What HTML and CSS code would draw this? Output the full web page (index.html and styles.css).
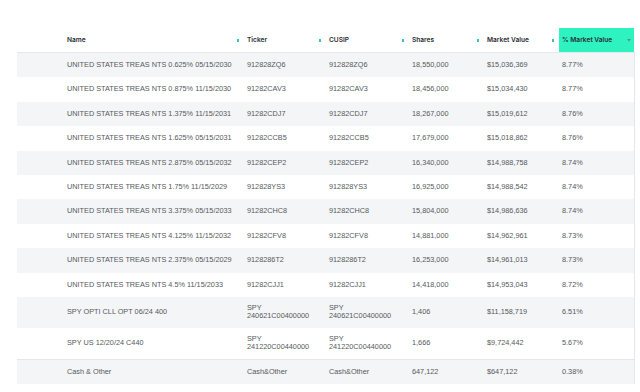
FILE: index.html
```html
<!DOCTYPE html>
<html lang="en">
<head>
    <meta charset="UTF-8">
    <meta name="viewport" content="width=device-width, initial-scale=1.0">
    <title>Holdings</title>
    <link rel="stylesheet" href="styles.css">
</head>
<body>

<div class="holdings">
  <table class="holdings-table">
    <colgroup>
      <col class="col-name">
      <col class="col-ticker">
      <col class="col-cusip">
      <col class="col-shares">
      <col class="col-mv">
      <col class="col-pct">
    </colgroup>
    <thead>
      <tr>
        <th class="first"><div class="th-in">Name <span class="sort-dot"></span></div></th>
        <th><div class="th-in">Ticker <span class="sort-dot"></span></div></th>
        <th><div class="th-in">CUSIP <span class="sort-dot"></span></div></th>
        <th><div class="th-in">Shares <span class="sort-dot"></span></div></th>
        <th><div class="th-in">Market Value <span class="sort-dot"></span></div></th>
        <th class="active"><div class="th-in">% Market Value <svg class="caret" width="4" height="3" viewBox="0 0 4 3"><path d="M0 0 L4 0 L2 2.5 Z" fill="#5f8f80"/></svg></div></th>
      </tr>
    </thead>
    <tbody>
      <tr><td class="first">UNITED STATES TREAS NTS 0.625% 05/15/2030</td><td>912828ZQ6</td><td>912828ZQ6</td><td>18,550,000</td><td>$15,036,369</td><td class="last">8.77%</td></tr>
      <tr><td class="first">UNITED STATES TREAS NTS 0.875% 11/15/2030</td><td>91282CAV3</td><td>91282CAV3</td><td>18,456,000</td><td>$15,034,430</td><td class="last">8.77%</td></tr>
      <tr><td class="first">UNITED STATES TREAS NTS 1.375% 11/15/2031</td><td>91282CDJ7</td><td>91282CDJ7</td><td>18,267,000</td><td>$15,019,612</td><td class="last">8.76%</td></tr>
      <tr><td class="first">UNITED STATES TREAS NTS 1.625% 05/15/2031</td><td>91282CCB5</td><td>91282CCB5</td><td>17,679,000</td><td>$15,018,862</td><td class="last">8.76%</td></tr>
      <tr><td class="first">UNITED STATES TREAS NTS 2.875% 05/15/2032</td><td>91282CEP2</td><td>91282CEP2</td><td>16,340,000</td><td>$14,988,758</td><td class="last">8.74%</td></tr>
      <tr><td class="first">UNITED STATES TREAS NTS 1.75% 11/15/2029</td><td>912828YS3</td><td>912828YS3</td><td>16,925,000</td><td>$14,988,542</td><td class="last">8.74%</td></tr>
      <tr><td class="first">UNITED STATES TREAS NTS 3.375% 05/15/2033</td><td>91282CHC8</td><td>91282CHC8</td><td>15,804,000</td><td>$14,986,636</td><td class="last">8.74%</td></tr>
      <tr><td class="first">UNITED STATES TREAS NTS 4.125% 11/15/2032</td><td>91282CFV8</td><td>91282CFV8</td><td>14,881,000</td><td>$14,962,961</td><td class="last">8.73%</td></tr>
      <tr><td class="first">UNITED STATES TREAS NTS 2.375% 05/15/2029</td><td>9128286T2</td><td>9128286T2</td><td>16,253,000</td><td>$14,961,013</td><td class="last">8.73%</td></tr>
      <tr><td class="first">UNITED STATES TREAS NTS 4.5% 11/15/2033</td><td>91282CJJ1</td><td>91282CJJ1</td><td>14,418,000</td><td>$14,953,043</td><td class="last">8.72%</td></tr>
      <tr class="two-line"><td class="first">SPY OPTI CLL OPT 06/24 400</td><td>SPY<br>240621C00400000</td><td>SPY<br>240621C00400000</td><td>1,406</td><td>$11,158,719</td><td class="last">6.51%</td></tr>
      <tr class="two-line"><td class="first">SPY US 12/20/24 C440</td><td>SPY<br>241220C00440000</td><td>SPY<br>241220C00440000</td><td>1,666</td><td>$9,724,442</td><td class="last">5.67%</td></tr>
      <tr class="cash"><td class="first">Cash &amp; Other</td><td>Cash&amp;Other</td><td>Cash&amp;Other</td><td>647,122</td><td>$647,122</td><td class="last">0.38%</td></tr>
    </tbody>
  </table>
</div>

</body>
</html>
```

FILE: styles.css
```css
/*RESETS*/

body {
    margin: 0;
    background: #fff;
}

/*HOLDINGS TABLE*/

.holdings {
    padding: 28px 0 0 17px;
}

.holdings-table {
    width: 617px;
    border-collapse: collapse;
    table-layout: fixed;
    font-family: "Liberation Sans", Arial, sans-serif;
    font-size: 7.3px;
    color: #555a60;
}

.col-name { width: 227px; }
.col-ticker { width: 82px; }
.col-cusip { width: 83px; }
.col-shares { width: 75px; }
.col-mv { width: 75px; }
.col-pct { width: 75px; }

.holdings-table th {
    height: 24px;
    padding: 0 5px 0 3px;
    font-family: "Inter", sans-serif;
    font-weight: 600;
    font-size: 6.6px;
    color: #2a2d33;
    text-align: left;
    border-bottom: 1px solid #e6e8eb;
}

.holdings-table th.first {
    padding-left: 50px;
}

.holdings-table th.active {
    background-color: #2ef2c0;
    padding-right: 3px;
}

.th-in {
    display: flex;
    align-items: center;
    justify-content: space-between;
}

.sort-dot {
    width: 2px;
    height: 3px;
    background-color: #3fbfb6;
}

.holdings-table td {
    padding: 8px 3px;
    line-height: 8.4px;
    vertical-align: middle;
    white-space: nowrap;
}

.holdings-table td.first {
    padding-left: 50px;
}

.holdings-table td.last {
    border-right: 1px solid #e4e6ea;
}

.holdings-table tbody tr {
    height: 24.4px;
}

.holdings-table tbody tr:nth-child(odd) {
    background-color: #f4f5f7;
}

.holdings-table tr.two-line td {
    padding-top: 7px;
    padding-bottom: 7px;
}

.holdings-table tr.cash {
    background-color: #f4f5f7;
    height: 23px;
}

.holdings-table tr.cash td {
    border-top: 1px solid #e4e6ea;
}
```
